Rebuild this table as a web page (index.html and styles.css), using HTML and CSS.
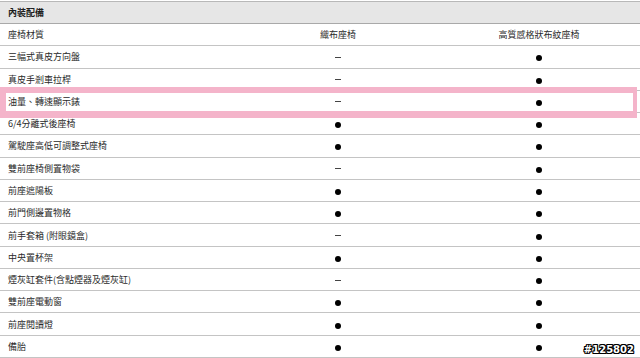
FILE: index.html
```html
<!DOCTYPE html>
<html lang="zh-Hant">
<head>
<meta charset="utf-8">
<title>內裝配備</title>
<link rel="stylesheet" href="styles.css">
</head>
<body>
<div class="spec">
  <div class="row head"><div class="name">內裝配備</div><div></div><div></div></div>
  <div class="row"><div class="name">座椅材質</div><div class="c">織布座椅</div><div class="c">高質感格狀布紋座椅</div></div>
  <div class="row"><div class="name">三幅式真皮方向盤</div><div class="c"><i class="no"></i></div><div class="c"><i class="yes"></i></div></div>
  <div class="row"><div class="name">真皮手剎車拉桿</div><div class="c"><i class="no"></i></div><div class="c"><i class="yes"></i></div></div>
  <div class="row mark"><div class="name">油量、轉速顯示錶</div><div class="c"><i class="no"></i></div><div class="c"><i class="yes"></i></div></div>
  <div class="row"><div class="name">6/4分離式後座椅</div><div class="c"><i class="yes"></i></div><div class="c"><i class="yes"></i></div></div>
  <div class="row"><div class="name">駕駛座高低可調整式座椅</div><div class="c"><i class="yes"></i></div><div class="c"><i class="yes"></i></div></div>
  <div class="row"><div class="name">雙前座椅側置物袋</div><div class="c"><i class="no"></i></div><div class="c"><i class="yes"></i></div></div>
  <div class="row"><div class="name">前座遮陽板</div><div class="c"><i class="yes"></i></div><div class="c"><i class="yes"></i></div></div>
  <div class="row"><div class="name">前門側邊置物格</div><div class="c"><i class="yes"></i></div><div class="c"><i class="yes"></i></div></div>
  <div class="row"><div class="name">前手套箱 (附眼鏡盒)</div><div class="c"><i class="no"></i></div><div class="c"><i class="yes"></i></div></div>
  <div class="row"><div class="name">中央置杯架</div><div class="c"><i class="yes"></i></div><div class="c"><i class="yes"></i></div></div>
  <div class="row"><div class="name">煙灰缸套件(含點煙器及煙灰缸)</div><div class="c"><i class="no"></i></div><div class="c"><i class="yes"></i></div></div>
  <div class="row"><div class="name">雙前座電動窗</div><div class="c"><i class="yes"></i></div><div class="c"><i class="yes"></i></div></div>
  <div class="row"><div class="name">前座閱讀燈</div><div class="c"><i class="yes"></i></div><div class="c"><i class="yes"></i></div></div>
  <div class="row"><div class="name">備胎</div><div class="c"><i class="yes"></i></div><div class="c"><i class="yes"></i></div></div>
  <div class="stamp">#125802</div>
</div>
</body>
</html>
```
FILE: styles.css
```css
html, body {
  margin: 0;
  padding: 0;
  background: #ffffff;
}
body {
  width: 640px;
  height: 358px;
  overflow: hidden;
  font-family: "Noto Sans CJK TC", "Noto Sans", sans-serif;
  font-size: 9px;
  color: #2a2a2a;
}
.spec {
  position: relative;
  padding-top: 1px;
}
.row {
  display: grid;
  grid-template-columns: 238px 200px 202px;
  align-items: center;
  height: 22.27px;
  box-sizing: border-box;
  border-bottom: 1px solid #c4c4c4;
  line-height: 1;
}
.row.head {
  height: 23px;
  border-top: 1px solid #b8b8b8;
  border-bottom-color: #a9a9a9;
  background: #e6e6e6;
  font-weight: bold;
  color: #1e1e1e;
}
.name {
  padding-left: 8px;
  white-space: nowrap;
}
.c {
  display: flex;
  justify-content: center;
  align-items: center;
  white-space: nowrap;
}
.yes {
  display: block;
  width: 6px;
  height: 6px;
  border-radius: 50%;
  background: #000000;
  margin-top: 3px;
}
.no {
  display: block;
  width: 6px;
  height: 1px;
  background: #444444;
  margin-top: 1px;
}
.mark {
  position: relative;
}
.mark::after {
  content: "";
  position: absolute;
  left: 0;
  top: -4px;
  width: 637px;
  height: 31px;
  box-sizing: border-box;
  border-style: solid;
  border-color: #f4b4ca;
  border-width: 6px 4px 7px 6px;
  pointer-events: none;
}
.stamp {
  position: absolute;
  right: 6px;
  bottom: 3px;
  font-family: "DejaVu Sans", sans-serif;
  font-weight: bold;
  font-size: 10px;
  line-height: 11px;
  color: #ffffff;
  text-shadow: 1px 0 0 #000, -1px 0 0 #000, 0 1px 0 #000, 0 -1px 0 #000,
    1px 1px 0 #000, -1px -1px 0 #000, 1px -1px 0 #000, -1px 1px 0 #000;
}
```
